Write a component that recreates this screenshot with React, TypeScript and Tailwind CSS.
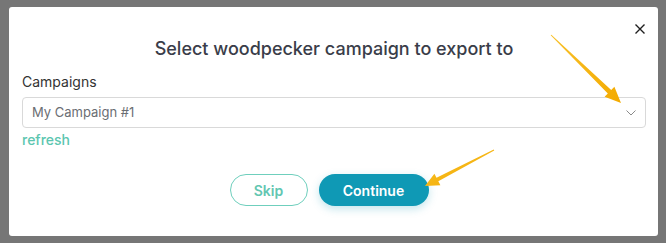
function Arrows() {
  return (
    <svg className="pointer-events-none absolute left-0 top-0" width="666" height="243" viewBox="0 0 666 243">
      <defs>
        <linearGradient id="arrowFill" x1="0" y1="0" x2="1" y2="1">
          <stop offset="0" stopColor="#f8c12a" />
          <stop offset="1" stopColor="#f3aa00" />
        </linearGradient>
      </defs>
      {/* arrow pointing at the select chevron */}
      <polygon
        points="550.65,35.36 607.8,93.6 604.6,96.8 621,103 614.4,86.8 611.2,90 551.35,34.64"
        fill="url(#arrowFill)"
      />
      {/* arrow pointing at continue */}
      <polygon
        points="493.77,149.56 436.5,177.7 434.4,173.7 425,186 440.4,185.3 438.3,181.3 494.23,150.44"
        fill="url(#arrowFill)"
      />
    </svg>
  )
}

export default function App() {
  return (
    <div
      className="relative h-[243px] w-[666px] overflow-hidden bg-[#767676] pl-[9px] pt-[7px]"
      style={{ fontFamily: 'Inter, "Noto Sans", sans-serif' }}
    >
      <div className="relative h-[229px] w-[649px] rounded-[3px] bg-white pl-[13px] pr-[12px] pt-[30px]">
        <button className="absolute right-[13px] top-[17px] text-[#1f1f1f]">
          <svg width="10" height="10" viewBox="0 0 10 10">
            <path d="M0.5 0.5 L9.5 9.5 M9.5 0.5 L0.5 9.5" stroke="currentColor" strokeWidth="1.4" />
          </svg>
        </button>

        <h2 className="text-center text-[18px] font-medium leading-[24px] text-[#3a3d49]">
          Select woodpecker campaign to export to
        </h2>

        <p className="mt-[11px] text-[14px] leading-[20px] text-[#333]">Campaigns</p>

        <div className="mt-[5px] flex h-[31px] items-center justify-between rounded-[4px] border border-[#d9d9d9] pl-[9px] pr-[9px]">
          <span className="text-[13px] text-[#6b6e73]">My Campaign #1</span>
          <svg width="10" height="6" viewBox="0 0 10 6" className="text-[#8a8a8a]">
            <path d="M0.5 0.5 L5 5 L9.5 0.5" fill="none" stroke="currentColor" strokeWidth="1" />
          </svg>
        </div>

        <p className="mt-[2px] text-[14px] font-medium leading-[20px] text-[#5cc6b0]">refresh</p>

        <div className="mt-[24px] flex justify-center gap-[11px] pr-[10px]">
          <button className="h-[32px] w-[78px] rounded-full border border-[#6fcfbd] text-[14px] font-semibold text-[#62c6b1]">
            Skip
          </button>
          <button className="h-[32px] w-[110px] rounded-full bg-[#0f99b5] text-[14px] font-semibold text-white shadow-[0_3px_8px_rgba(15,153,181,0.25)]">
            Continue
          </button>
        </div>
      </div>
      <Arrows />
    </div>
  )
}
